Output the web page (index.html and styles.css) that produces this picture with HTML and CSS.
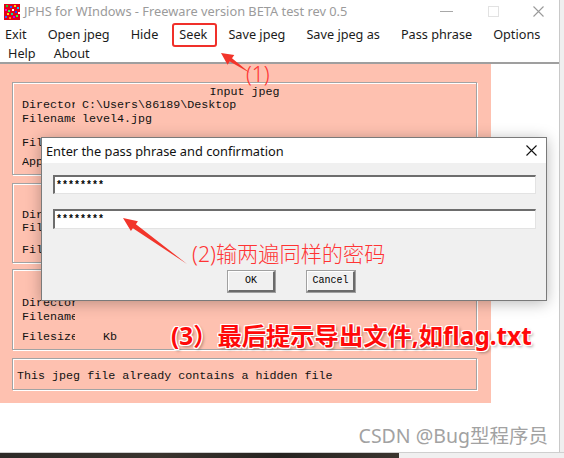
FILE: index.html
```html
<!DOCTYPE html>
<html>
<head>
<meta charset="utf-8">
<link rel="stylesheet" href="styles.css">
</head>
<body>
<div class="screen">
  <div class="window">
    <div class="titlebar">
      <svg class="appicon" width="16" height="16" viewBox="0 0 16 16">
        <rect width="16" height="16" fill="#e3001a"/>
        <rect x="2" y="1" width="2" height="2" fill="#19d42a"/>
        <rect x="6" y="2" width="2" height="2" fill="#2a5cff"/>
        <rect x="10" y="1" width="2" height="2" fill="#ffd800"/>
        <rect x="13" y="3" width="2" height="2" fill="#00c8ff"/>
        <rect x="1" y="5" width="2" height="2" fill="#ff00c8"/>
        <rect x="4" y="6" width="2" height="2" fill="#27ff5a"/>
        <rect x="8" y="5" width="2" height="2" fill="#ffffff"/>
        <rect x="11" y="7" width="2" height="2" fill="#1b3cff"/>
        <rect x="3" y="9" width="2" height="2" fill="#ffe000"/>
        <rect x="7" y="9" width="2" height="2" fill="#00e0a0"/>
        <rect x="12" y="11" width="2" height="2" fill="#30ff30"/>
        <rect x="1" y="12" width="2" height="2" fill="#3060ff"/>
        <rect x="5" y="13" width="2" height="2" fill="#ff9a00"/>
        <rect x="9" y="12" width="2" height="2" fill="#c000ff"/>
        <rect x="14" y="8" width="2" height="2" fill="#ffffff"/>
      </svg>
      <span class="title">JPHS for WIndows - Freeware version BETA test rev 0.5</span>
      <div class="controls">
        <span class="ctl-min"></span>
        <span class="ctl-max"></span>
        <svg class="ctl-close" width="11" height="11" viewBox="0 0 11 11"><path d="M0.5 0.5 L10.5 10.5 M10.5 0.5 L0.5 10.5" stroke="#9a9a9a" stroke-width="1.1"/></svg>
      </div>
    </div>
    <div class="menubar">
      <div class="menurow">
        <span class="mi first">Exit</span>
        <span class="mi">Open jpeg</span>
        <span class="mi">Hide</span>
        <span class="mi">Seek</span>
        <span class="mi">Save jpeg</span>
        <span class="mi">Save jpeg as</span>
        <span class="mi">Pass phrase</span>
        <span class="mi">Options</span>
      </div>
      <div class="menurow row2">
        <span class="mi">Help</span>
        <span class="mi">About</span>
      </div>
    </div>
    <div class="menusep"></div>
    <div class="body-row">
      <div class="client">
        <div class="group g1">
          <div class="gtitle">Input jpeg</div>
          <div class="line"><span class="lbl">Directory</span><span class="val">C:\Users\86189\Desktop</span></div>
          <div class="line"><span class="lbl">Filename</span><span class="val">level4.jpg</span></div>
          <div class="line gap10"><span class="lbl">Filesize</span><span class="val">Kb</span></div>
          <div class="line gap5"><span class="lbl">Approx max capacity</span><span class="val">bytes</span></div>
        </div>
        <div class="group g2">
          <div class="gtitle">Hidden file</div>
          <div class="line"><span class="lbl">Directory</span><span class="val"></span></div>
          <div class="line"><span class="lbl">Filename</span><span class="val"></span></div>
          <div class="line gap8"><span class="lbl">Filesize</span><span class="val"></span></div>
        </div>
        <div class="group g3">
          <div class="gtitle">Saved jpeg</div>
          <div class="line gap10"><span class="lbl">Directory</span><span class="val"></span></div>
          <div class="line"><span class="lbl">Filename</span><span class="val"></span></div>
          <div class="line gap6"><span class="lbl lbl-short">Filesize</span><span class="val">   Kb</span></div>
        </div>
        <div class="group g4">
          <div class="status">This jpeg file already contains a hidden file</div>
        </div>
      </div>
    </div>
    <div class="watermark">CSDN @Bug型程序员</div>
  </div>
  <div class="bottomstrip">
    <div class="photo"></div>
    <div class="desk"></div>
  </div>

  <div class="dialog">
    <div class="dtitle">
      <span>Enter the pass phrase and confirmation</span>
      <svg width="11" height="11" viewBox="0 0 11 11"><path d="M0.5 0.5 L10.5 10.5 M10.5 0.5 L0.5 10.5" stroke="#111" stroke-width="1.1"/></svg>
    </div>
    <div class="dbody">
      <div class="field f1">********</div>
      <div class="field f2">********</div>
      <div class="buttons">
        <span class="btn ok">OK</span>
        <span class="btn cancel">Cancel</span>
      </div>
    </div>
  </div>

  <div class="seekbox"></div>
  <svg class="arrows" width="564" height="458" viewBox="0 0 564 458">
    <polygon points="221,53 234.3,54.9 232,58.2 250,73 229.8,61.4 227.5,64.7" fill="#f2352b"/>
    <polygon points="123,218 137.9,221.3 135.9,224.2 187,264 132.9,228.2 130.9,231.1" fill="#f2352b"/>
  </svg>
  <div class="note n1">(1)</div>
  <div class="note n2">(2)输两遍同样的密码</div>
  <div class="note n3">(3）最后提示导出文件,如flag.txt</div>
</div>
</body>
</html>
```

FILE: styles.css
```css
html, body {
  margin: 0;
  padding: 0;
}
body {
  width: 564px;
  height: 458px;
  overflow: hidden;
  font-family: "Noto Sans", "Noto Sans CJK SC", sans-serif;
}
.screen {
  position: relative;
  width: 564px;
  height: 458px;
  background: #efefef;
  overflow: hidden;
}
.window {
  position: relative;
  width: 560px;
  height: 452px;
  background: #ffffff;
  border-right: 1px solid #c9c9c9;
  box-sizing: border-box;
}
.titlebar {
  height: 22px;
  display: flex;
  align-items: center;
  padding-left: 4px;
}
.appicon {
  flex: none;
  margin-top: 1px;
}
.title {
  margin-left: 4px;
  font-size: 12.8px;
  color: #9b9b9b;
  white-space: nowrap;
}
.controls {
  margin-left: auto;
  display: flex;
  align-items: center;
  height: 22px;
}
.ctl-min {
  width: 13px;
  height: 1px;
  background: #a8a8a8;
  margin-right: 35px;
  margin-top: 1px;
}
.ctl-max {
  width: 9px;
  height: 9px;
  border: 1px solid #e2e2e2;
  margin-right: 34px;
}
.ctl-close {
  margin-right: 15px;
}
.menubar {
  height: 40px;
  display: flex;
  flex-direction: column;
}
.menurow {
  display: flex;
  gap: 21px;
  height: 19px;
  align-items: center;
  padding-left: 5px;
  font-size: 12.7px;
  color: #1b1b1b;
  white-space: nowrap;
  margin-top: 2px;
}
.menurow.row2 {
  padding-left: 8px;
  gap: 18px;
  margin-top: 0;
}
.menusep {
  height: 2px;
  background: #9f9f9f;
}
.body-row {
  display: flex;
}
.client {
  width: 491px;
  height: 339px;
  background: #fec1b0;
  padding: 18px 14px 0 12px;
  box-sizing: border-box;
  display: flex;
  flex-direction: column;
}
.group {
  border: 1px solid #a3a3a3;
  box-shadow: inset 1px 1px 0 #ffffff, 1px 1px 0 #ffffff;
  padding-left: 9px;
  font-family: "Liberation Mono", "DejaVu Sans Mono", monospace;
  font-size: 11.7px;
  color: #111;
}
.gtitle {
  line-height: 14px;
  height: 14px;
  text-align: center;
  padding-right: 9px;
}
.line {
  display: grid;
  grid-template-columns: 53px 1fr;
  column-gap: 7px;
  line-height: 14px;
  height: 14px;
  white-space: pre;
}
.lbl {
  overflow: hidden;
  white-space: nowrap;
}
.val {
  white-space: pre;
}
.g1 {
  padding-top: 2px;
  height: 93px;
  box-sizing: border-box;
}
.g1 .gtitle {
  margin-bottom: -1px;
}
.g1 .gap10 { margin-top: 10px; }
.g1 .gap5 { margin-top: 5px; }
.g2 {
  margin-top: 8px;
  padding-top: 2px;
  height: 80px;
  box-sizing: border-box;
}
.g2 .gtitle { margin-bottom: 8px; }
.g2 .line + .line { margin-top: -1px; }
.g2 .gap8 { margin-top: 8px !important; }
.g3 {
  margin-top: 6px;
  padding-top: 2px;
  height: 81px;
  box-sizing: border-box;
}
.g3 .gap10 { margin-top: 10px; }
.g3 .gap6 { margin-top: 6px; }
.g4 {
  margin-top: 8px;
  height: 32px;
  box-sizing: border-box;
  padding-left: 4px;
  padding-top: 10px;
}
.status {
  line-height: 14px;
  white-space: pre;
}
.watermark {
  position: absolute;
  right: 11px;
  bottom: 3px;
  font-size: 19.5px;
  color: #a2a2a2;
  white-space: nowrap;
}
.bottomstrip {
  display: flex;
  height: 6px;
  border-top: 1px solid #cfcfcf;
}
.photo {
  width: 399px;
  background: linear-gradient(90deg, #2d2a27, #3a342e 40%, #262320 70%, #3b352f);
}
.desk {
  flex: 1;
  background: #f0f0f0;
}
.dialog {
  position: absolute;
  left: 41px;
  top: 137px;
  width: 506px;
  height: 164px;
  border: 1px solid #7a7a7a;
  box-sizing: border-box;
  background: #f0f0f0;
  box-shadow: 0 2px 14px rgba(0, 0, 0, 0.28);
  display: flex;
  flex-direction: column;
}
.dtitle {
  height: 25px;
  flex: none;
  background: #ffffff;
  display: flex;
  align-items: center;
  justify-content: space-between;
  padding: 0 9px 0 4px;
  font-size: 12.8px;
  color: #111;
}
.dbody {
  flex: 1;
  padding: 12px 10px 0 11px;
  display: flex;
  flex-direction: column;
}
.field {
  height: 19px;
  background: #ffffff;
  border-top: 2px solid #6d6d6d;
  border-left: 2px solid #6d6d6d;
  border-right: 1px solid #e3e3e3;
  border-bottom: 1px solid #e3e3e3;
  box-sizing: border-box;
  padding-left: 1px;
  font-family: "Liberation Mono", "DejaVu Sans Mono", monospace;
  font-size: 10px;
  font-weight: bold;
  line-height: 17px;
  color: #000;
}
.f2 {
  margin-top: 15px;
  height: 20px;
}
.buttons {
  display: flex;
  justify-content: center;
  gap: 32px;
  margin-top: 42px;
  padding-right: 6px;
}
.btn {
  height: 21px;
  box-sizing: border-box;
  border-top: 1px solid #ffffff;
  border-left: 1px solid #ffffff;
  border-right: 2px solid #6a6a6a;
  border-bottom: 2px solid #6a6a6a;
  background: #f0f0f0;
  box-shadow: 0 0 0 1px #a0a0a0;
  font-family: "Liberation Mono", "DejaVu Sans Mono", monospace;
  font-size: 10px;
  line-height: 18px;
  text-align: center;
  color: #000;
}
.ok { width: 47px; }
.cancel { width: 48px; }
.seekbox {
  position: absolute;
  left: 172px;
  top: 23px;
  width: 45px;
  height: 24px;
  box-sizing: border-box;
  border: 2px solid #f0302a;
  border-radius: 3px;
}
.arrows {
  position: absolute;
  left: 0;
  top: 0;
}
.note {
  position: absolute;
  color: #ff3434;
  white-space: nowrap;
  font-family: "Noto Sans", "Noto Sans CJK SC", sans-serif;
}
.n1 {
  left: 246px;
  top: 60px;
  font-size: 21px;
  line-height: 28px;
  font-weight: 300;
}
.n2 {
  left: 192px;
  top: 240px;
  font-size: 21.2px;
  line-height: 28px;
  font-weight: 300;
}
.n3 {
  left: 171px;
  top: 320px;
  font-size: 24.3px;
  line-height: 32px;
  font-weight: 700;
  color: #ff0a0a;
  text-shadow: 1px 0 0 #fff, -1px 0 0 #fff, 0 1px 0 #fff, 0 -1px 0 #fff,
    1px 1px 0 #fff, -1px -1px 0 #fff, 1px -1px 0 #fff, -1px 1px 0 #fff,
    2px 2px 3px rgba(0, 0, 0, 0.35);
}
```
